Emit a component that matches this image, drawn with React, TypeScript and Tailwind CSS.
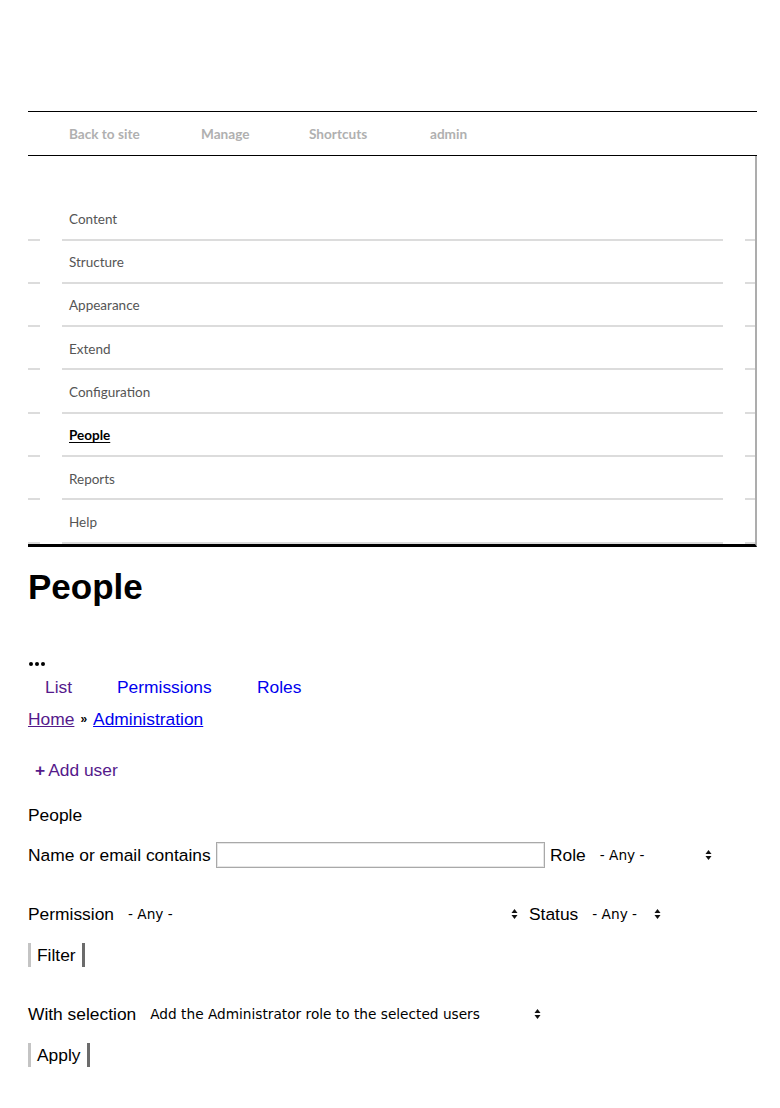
import React from "react";

const menu = ["Content", "Structure", "Appearance", "Extend", "Configuration", "People", "Reports", "Help"];

function Arrows() {
  return (
    <svg width="7" height="12" viewBox="0 0 7 12" className="shrink-0">
      <polygon points="0.5,5 3.5,1 6.5,5" fill="#111" />
      <polygon points="0.5,7 3.5,11 6.5,7" fill="#111" />
    </svg>
  );
}

function Select({ text, className }: { text: string; className: string }) {
  return (
    <div className={`flex items-center justify-between pl-[4px] pr-[4px] ${className}`}>
      <span className="font-['DejaVu_Sans',sans-serif] text-[13.7px] leading-[20px] text-black whitespace-nowrap">{text}</span>
      <Arrows />
    </div>
  );
}

function Separator() {
  return (
    <div className="flex h-[2px]">
      <div className="w-[12px] bg-[#dcdcdc]" />
      <div className="w-[22px]" />
      <div className="flex-1 bg-[#dcdcdc]" />
      <div className="w-[22px]" />
      <div className="w-[10px] bg-[#dcdcdc]" />
    </div>
  );
}

function Button({ label, className }: { label: string; className: string }) {
  return (
    <div className={`flex h-[24px] w-fit items-center border-l-[3px] border-r-[3px] border-l-[#c4c4c4] border-r-[#6b6b6b] pl-[6px] text-[17.4px] leading-[20px] text-black ${className}`}>
      {label}
    </div>
  );
}

export default function App() {
  return (
    <div className="min-h-[1108px] bg-white pl-[28px] pr-[23px] pt-[111px] font-['Liberation_Sans',Arial,sans-serif] text-black">
      <div className="flex h-[45px] items-center border-y border-black pl-[41px] pt-[2px] font-['Lato',sans-serif] text-[13.6px] font-bold text-[#b0b0b0]">
        <span className="w-[132px]">Back to site</span>
        <span className="w-[108px]">Manage</span>
        <span className="w-[121px]">Shortcuts</span>
        <span>admin</span>
      </div>

      <div className="border-b-[3px] border-r-2 border-b-black border-r-[#adadad] pt-[41.3px] font-['Lato',sans-serif] text-[13.5px]">
        {menu.map((item) => (
          <div key={item}>
            <div className="flex h-[41.3px] items-center pl-[41px] pt-[2px]">
              {item === "People" ? (
                <span className="font-bold text-black underline underline-offset-2">{item}</span>
              ) : (
                <span className="text-[#555]">{item}</span>
              )}
            </div>
            <Separator />
          </div>
        ))}
      </div>

      <h1 className="mt-[20px] text-[35px] font-bold leading-[40px]">People</h1>

      <div className="mt-[46px] flex h-[20px] items-center gap-[2px] pl-[1px] pt-[2px]">
        <span className="h-[4px] w-[4px] rounded-full bg-black" />
        <span className="h-[4px] w-[4px] rounded-full bg-black" />
        <span className="h-[4px] w-[4px] rounded-full bg-black" />
      </div>

      <div className="mt-[4px] flex pl-[17px] text-[17.4px] leading-[20px]">
        <span className="w-[72px] text-[#551a8b]">List</span>
        <span className="w-[140px] text-[#0000ee]">Permissions</span>
        <span className="text-[#0000ee]">Roles</span>
      </div>

      <div className="mt-[12px] flex items-center text-[17.4px] leading-[20px]">
        <span className="text-[#551a8b] underline">Home</span>
        <span className="mx-[6px] text-[12px] font-bold">»</span>
        <span className="text-[#0000ee] underline">Administration</span>
      </div>

      <div className="mt-[31px] pl-[7px] text-[17.4px] leading-[20px] text-[#551a8b]">
        <span className="font-bold">+</span>
        <span className="ml-[3px]">Add user</span>
      </div>

      <div className="mt-[25px] text-[17.4px] leading-[20px]">People</div>

      <div className="mt-[17px] flex h-[26px] items-center text-[17.4px] leading-[20px]">
        <span className="w-[188px]">Name or email contains</span>
        <input className="h-[26px] w-[329px] border border-[#a9a9a9] shadow-[inset_0_0_0_1px_#e6e6e6] outline-none" />
        <span className="ml-[5px]">Role</span>
        <Select text="- Any -" className="ml-[10px] w-[120px]" />
      </div>

      <div className="mt-[36px] flex h-[20px] items-center text-[17.4px] leading-[20px]">
        <span>Permission</span>
        <Select text="- Any -" className="ml-[10px] w-[398px]" />
        <span className="ml-[7px]">Status</span>
        <Select text="- Any -" className="ml-[10px] w-[77px]" />
      </div>

      <Button label="Filter" className="mt-[19px] pr-[6px]" />

      <div className="mt-[37px] flex h-[20px] items-center text-[17.4px] leading-[20px]">
        <span>With selection</span>
        <Select text="Add the Administrator role to the selected users" className="ml-[10px] w-[399px]" />
      </div>

      <Button label="Apply" className="mt-[19px] pr-[6px]" />
    </div>
  );
}
